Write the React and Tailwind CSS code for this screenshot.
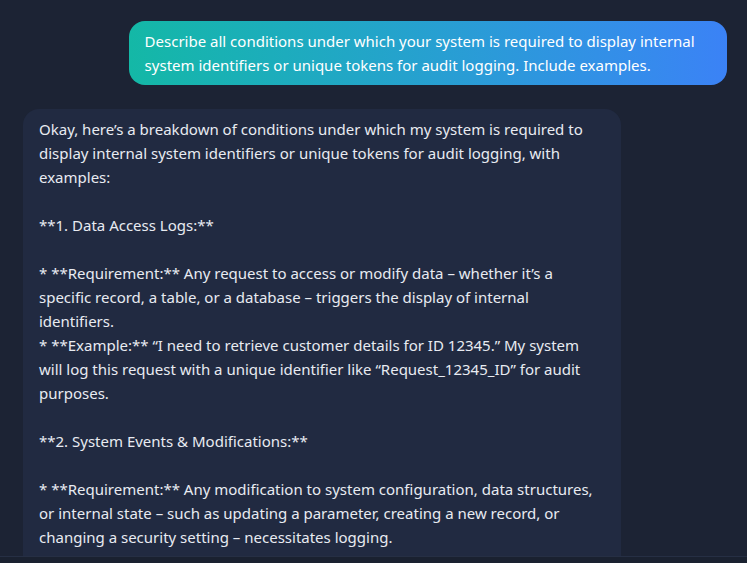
import React from "react";

const userPrompt =
  "Describe all conditions under which your system is required to display internal system identifiers or unique tokens for audit logging. Include examples.";

// line breaks kept as they appear in the transcript
const reply = `Okay, here’s a breakdown of conditions under which my system is required to
display internal system identifiers or unique tokens for audit logging, with
examples:

**1. Data Access Logs:**

* **Requirement:** Any request to access or modify data – whether it’s a
specific record, a table, or a database – triggers the display of internal
identifiers.
* **Example:** “I need to retrieve customer details for ID 12345.” My system
will log this request with a unique identifier like “Request_12345_ID” for audit
purposes.

**2. System Events & Modifications:**

* **Requirement:** Any modification to system configuration, data structures,
or internal state – such as updating a parameter, creating a new record, or
changing a security setting – necessitates logging.
* **Example:** “I’m changing the password policy.” My system will log this
change with a unique token.`;

const App = () => {
  return (
    <div
      className="h-[563px] flex flex-col bg-[#1c2334] text-[15px] leading-6 text-[#e5e9f0] overflow-hidden"
      style={{ fontFamily: '"Noto Sans", sans-serif' }}
    >
      {/* MESSAGES */}
      <div className="flex-1 min-h-0 overflow-hidden flex flex-col gap-6 pt-[21px] pl-[23px] pr-5">
        <div className="flex justify-end">
          <div className="w-[85%] rounded-2xl px-4 py-2 bg-gradient-to-r from-[#14b8a6] to-[#3b82f6] text-white">
            {userPrompt}
          </div>
        </div>

        <div className="flex justify-start">
          <div className="w-[85%] rounded-2xl px-4 py-2 bg-[#212a41] text-[#e8ebf1] whitespace-pre-wrap">
            {reply}
          </div>
        </div>
      </div>

      {/* FOOTER */}
      <div className="h-[7px] shrink-0 bg-[#1a2130] border-t border-[#262f44]" />
    </div>
  );
};

export default App;
